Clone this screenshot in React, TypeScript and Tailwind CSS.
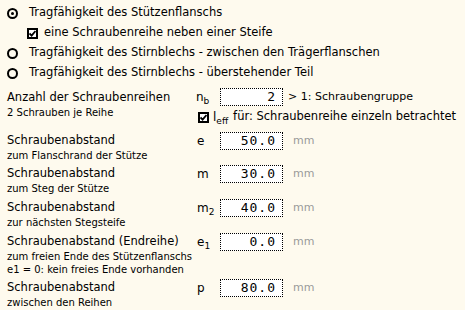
import React from 'react';

const font = { fontFamily: '"DejaVu Sans", Verdana, sans-serif' };

const Radio: React.FC<{ checked?: boolean }> = ({ checked }) => (
  <div className="w-[11px] h-[11px] rounded-full border-2 border-black flex items-center justify-center shrink-0">
    {checked && <div className="w-[3px] h-[3px] rounded-full bg-black" />}
  </div>
);

const Check: React.FC = () => (
  <div className="w-[11px] h-[11px] border-2 border-black bg-white flex items-center justify-center shrink-0">
    <svg width="7" height="7" viewBox="0 0 7 7">
      <path d="M0.5 3.5 L2.6 5.6 L6.5 1" stroke="black" strokeWidth="1.8" fill="none" />
    </svg>
  </div>
);

const Field: React.FC<{ value: string }> = ({ value }) => (
  <div
    className="w-[63px] h-[18px] border border-dotted border-black bg-white flex items-center justify-end pr-[6px] text-[13px] tracking-[1px] shrink-0"
    style={{ fontFamily: '"DejaVu Sans Mono", monospace' }}
  >
    {value}
  </div>
);

interface RowProps {
  label: string;
  subs: string[];
  sym: React.ReactNode;
  value: string;
  className?: string;
}

const Row: React.FC<RowProps> = ({ label, subs, sym, value, className }) => (
  <div className={`flex items-start ${className ?? ''}`}>
    <div className="w-[189px]">
      <div className="h-[17px] flex items-center text-[11.5px]">{label}</div>
      {subs.map((s) => (
        <div key={s} className="h-[13px] flex items-center text-[10px]">
          {s}
        </div>
      ))}
    </div>
    <div className="w-[24px] h-[18px] flex items-center text-[12px] pl-[1px]">{sym}</div>
    <Field value={value} />
    <div className="h-[18px] flex items-center ml-[10px] text-[11px] text-[#9a9a9a]">mm</div>
  </div>
);

const Sym: React.FC<{ base: string; sub?: string }> = ({ base, sub }) => (
  <span>
    {base}
    {sub && <span className="text-[9px] relative top-[3px]">{sub}</span>}
  </span>
);

export default function App() {
  return (
    <div className="w-[465px] h-[310px] bg-[#fefaee] text-black overflow-hidden" style={font}>
      <div className="pt-[3px] pl-[7px]">
        <div className="h-[20px] flex items-center">
          <Radio checked />
          <span className="ml-[11px] text-[11.5px]">Tragfähigkeit des Stützenflanschs</span>
        </div>
        <div className="h-[20px] flex items-center pl-[20px]">
          <Check />
          <span className="ml-[6px] text-[11.5px]">eine Schraubenreihe neben einer Steife</span>
        </div>
        <div className="h-[20px] flex items-center">
          <Radio />
          <span className="ml-[11px] text-[11.5px]">Tragfähigkeit des Stirnblechs - zwischen den Trägerflanschen</span>
        </div>
        <div className="h-[20px] flex items-center">
          <Radio />
          <span className="ml-[11px] text-[11.5px]">Tragfähigkeit des Stirnblechs - überstehender Teil</span>
        </div>

        <div className="flex items-start mt-[5px]">
          <div className="w-[189px]">
            <div className="h-[18px] flex items-center pt-[2px] text-[11.5px]">Anzahl der Schraubenreihen</div>
            <div className="h-[12px] flex items-center text-[10px]">2 Schrauben je Reihe</div>
          </div>
          <div>
            <div className="flex items-center">
              <div className="w-[24px] h-[18px] flex items-center text-[12px]">
                <Sym base="n" sub="b" />
              </div>
              <Field value="2" />
              <span className="ml-[5px] text-[11px]">&gt; 1: Schraubengruppe</span>
            </div>
            <div className="flex items-center h-[14px] mt-[4px] pl-[2px]">
              <Check />
              <span className="ml-[4px] text-[12px]">
                <Sym base="l" sub="eff" />
              </span>
              <span className="ml-[5px] text-[11.5px]">für: Schraubenreihe einzeln betrachtet</span>
            </div>
          </div>
        </div>

        <Row className="mt-[8px]" label="Schraubenabstand" subs={['zum Flanschrand der Stütze']} sym={<Sym base="e" />} value="50.0" />
        <Row className="mt-[3px]" label="Schraubenabstand" subs={['zum Steg der Stütze']} sym={<Sym base="m" />} value="30.0" />
        <Row className="mt-[4px]" label="Schraubenabstand" subs={['zur nächsten Stegsteife']} sym={<Sym base="m" sub="2" />} value="40.0" />
        <Row
          className="mt-[4px]"
          label="Schraubenabstand (Endreihe)"
          subs={['zum freien Ende des Stützenflanschs', 'e1 = 0: kein freies Ende vorhanden']}
          sym={<Sym base="e" sub="1" />}
          value="0.0"
        />
        <Row className="mt-[3px]" label="Schraubenabstand" subs={['zwischen den Reihen']} sym={<Sym base="p" />} value="80.0" />
      </div>
    </div>
  );
}
